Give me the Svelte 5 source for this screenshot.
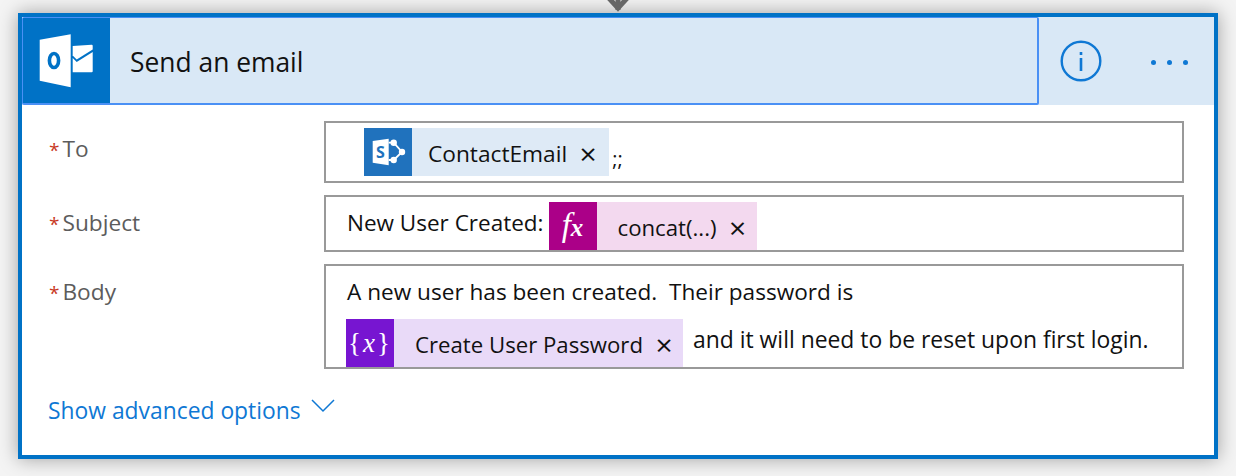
<script lang="ts">
	const rows = { to: 'To', subject: 'Subject', body: 'Body' };
</script>

<div class="page">
	<svg class="connector" width="30" height="14" viewBox="0 0 30 14">
		<path d="M3 -5 L15 8 L27 -5" fill="none" stroke="#666" stroke-width="5" />
		<path d="M15 -2 V10" fill="none" stroke="#666" stroke-width="5" />
	</svg>

	<section class="card">
		<header class="head">
			<div class="title">
				<div class="logo">
					<svg width="54" height="54" viewBox="0 0 54 54">
						<path d="M0.7 5.7 L31.7 0.3 V53.3 L0.7 46.7 Z" fill="#fff" />
						<ellipse cx="15" cy="26.5" rx="4.6" ry="7" fill="none" stroke="#0072c6" stroke-width="3.6" />
						<path d="M33.7 12 L52.7 10.7 Q53.7 10.7 53.7 11.7 V15.5 L37.7 25.5 L33.7 21.5 Z" fill="#fff" />
						<path d="M33.7 24 L37.7 28 L53.7 18 V37.3 Q53.7 38.3 52.7 38.3 H33.7 Z" fill="#fff" />
					</svg>
				</div>
				<h1>Send an email</h1>
			</div>
			<div class="actions">
				<svg class="info" width="42" height="42" viewBox="0 0 42 42">
					<circle cx="21" cy="21" r="19.3" fill="none" stroke="#0f78d4" stroke-width="2.4" />
					<rect x="19.7" y="18" width="2.6" height="13" fill="#0f78d4" />
					<rect x="19.7" y="12" width="2.6" height="3" fill="#0f78d4" />
				</svg>
				<div class="dots"><i></i><i></i><i></i></div>
			</div>
		</header>

		<div class="form">
			<div class="row">
				<div class="label"><span>*</span>{rows.to}</div>
				<div class="field to">
					<div class="token sp">
						<div class="tile">
							<svg width="48" height="48" viewBox="0 0 48 48">
								<path d="M24.7 14.7 H29.7 L38 24 L29.7 32 H24.7" fill="none" stroke="#fff" stroke-width="1.8" />
								<circle cx="29.7" cy="14.7" r="3.2" fill="#fff" />
								<circle cx="38" cy="24" r="3.2" fill="#fff" />
								<circle cx="29.7" cy="32" r="3.2" fill="#fff" />
								<path d="M8.7 13 L24.7 10.7 V37.3 L8.7 34.7 Z" fill="#fff" />
								<text x="16.5" y="29.5" text-anchor="middle" class="s">S</text>
							</svg>
						</div>
						<span class="name">ContactEmail</span>
						<span class="x">×</span>
					</div>
					<span class="semi">;;</span>
				</div>
			</div>

			<div class="row">
				<div class="label"><span>*</span>{rows.subject}</div>
				<div class="field subject">
					<span class="text">New User Created:</span>
					<div class="token fx">
						<div class="tile"><span class="f">f<b>x</b></span></div>
						<span class="name wide">concat(...)</span>
						<span class="x">×</span>
					</div>
				</div>
			</div>

			<div class="row">
				<div class="label"><span>*</span>{rows.body}</div>
				<div class="field body">
					<div class="line first">A new user has been created.&nbsp; Their password is</div>
					<div class="line second">
						<div class="token var">
							<div class="tile"><span class="v">&#123;<em>x</em>&#125;</span></div>
							<span class="name wide">Create User Password</span>
							<span class="x">×</span>
						</div>
						<span class="text">and it will need to be reset upon first login.</span>
					</div>
				</div>
			</div>
		</div>

		<div class="more">
			<span>Show advanced options</span>
			<svg width="24" height="14" viewBox="0 0 24 14">
				<path d="M1 1 L12 12 L23 1" fill="none" stroke="#0f78d4" stroke-width="1.5" />
			</svg>
		</div>
	</section>
</div>

<style>
	:global(body) {
		margin: 0;
		background: #f4f4f4;
	}

	.page {
		position: relative;
		width: 1236px;
		height: 476px;
		padding: 13px 18px 0;
		box-sizing: border-box;
		overflow: hidden;
		font-family: 'Open Sans', 'Noto Sans', sans-serif;
		color: #111;
	}

	.connector {
		position: absolute;
		left: 603px;
		top: 0;
		z-index: 2;
	}

	.card {
		width: 1200px;
		height: 446px;
		box-sizing: border-box;
		border: 4px solid #0072c6;
		background: #fff;
		box-shadow: 0 0 18px rgba(0, 0, 0, 0.35);
	}

	.head {
		display: flex;
		height: 88px;
		background: #d9e8f6;
	}

	.title {
		display: flex;
		align-items: center;
		width: 1017px;
		box-sizing: border-box;
		border: 2px solid #4a90f5;
		border-width: 1px 2px 2px 1px;
		border-radius: 2px;
	}

	.logo {
		display: flex;
		align-items: center;
		justify-content: center;
		width: 87px;
		align-self: stretch;
		background: #0072c6;
	}

	.logo svg {
		margin-right: 1px;
	}

	h1 {
		margin: 2px 0 0 20px;
		font-size: 26.4px;
		font-weight: 400;
	}

	.actions {
		display: flex;
		align-items: center;
		flex: 1;
		padding-left: 21px;
	}

	.info {
		margin-right: 49px;
	}

	.dots {
		display: flex;
		gap: 11px;
		margin-top: 2px;
	}

	.dots i {
		width: 5px;
		height: 5px;
		border-radius: 50%;
		background: #0f78d4;
	}

	.form {
		display: flex;
		flex-direction: column;
		gap: 12px;
		padding: 16px 30px 0 26px;
	}

	.row {
		display: flex;
	}

	.label {
		width: 276px;
		padding-top: 14px;
		font-size: 22.7px;
		line-height: 28px;
		color: #5c5c5c;
	}

	.label span {
		margin: 0 3px 0 1px;
		font-size: 19px;
		color: #c8391f;
	}

	.field {
		width: 860px;
		box-sizing: border-box;
		border: 2px solid #999;
		font-size: 22.7px;
	}

	.to {
		display: flex;
		align-items: flex-end;
		height: 62px;
		padding: 5px 0 0 38px;
	}

	.to .token {
		align-self: flex-start;
	}

	.semi {
		margin: 0 0 7px 3px;
		font-size: 20px;
		line-height: 30px;
	}

	.subject {
		display: flex;
		height: 57px;
		padding: 5px 0 0 21px;
	}

	.subject .text {
		font-size: 22.5px;
		line-height: 42px;
		margin-right: 5px;
	}

	.body {
		height: 105px;
		padding: 8px 0 0 20px;
	}

	.line {
		line-height: 36px;
		font-size: 22.6px;
	}

	.first {
		margin-left: 1px;
	}

	.second {
		display: flex;
		margin-top: 9px;
		height: 48px;
	}

	.second .text {
		margin-left: 10px;
		font-size: 22.9px;
		line-height: 42px;
	}

	.token {
		display: flex;
		align-items: center;
		height: 48px;
		line-height: 44px;
	}

	.tile {
		display: flex;
		align-items: center;
		justify-content: center;
		width: 48px;
		height: 48px;
		color: #fff;
	}

	.name {
		margin-left: 16px;
		padding-top: 4px;
	}

	.name.wide {
		margin-left: 21px;
		font-size: 22.2px;
	}

	.x {
		display: flex;
		justify-content: center;
		width: 16px;
		margin: 0 13px;
		padding-top: 4px;
		font-size: 30px;
	}

	.wide + .x {
		margin-right: 11px;
	}

	.sp {
		background: #deeaf6;
	}

	.sp .tile {
		background: #2072bd;
	}

	.s {
		font-size: 16px;
		font-weight: 700;
		fill: #2072bd;
	}

	.fx {
		background: #f3d9ef;
	}

	.fx .tile {
		background: #ab0088;
	}

	.f {
		font-family: 'Liberation Serif', serif;
		font-style: italic;
		font-size: 33px;
		line-height: 40px;
	}

	.f b {
		font-size: 25px;
	}

	.var {
		background: #e9daf8;
	}

	.var .tile {
		background: #7715d1;
	}

	.v {
		font-family: 'Liberation Serif', serif;
		font-size: 27px;
		letter-spacing: 2px;
		line-height: 40px;
	}

	.more {
		display: flex;
		align-items: center;
		gap: 10px;
		margin: 26px 0 0 26px;
		font-size: 22.85px;
		color: #0f78d4;
	}

	.more svg {
		margin-bottom: 10px;
	}
</style>
